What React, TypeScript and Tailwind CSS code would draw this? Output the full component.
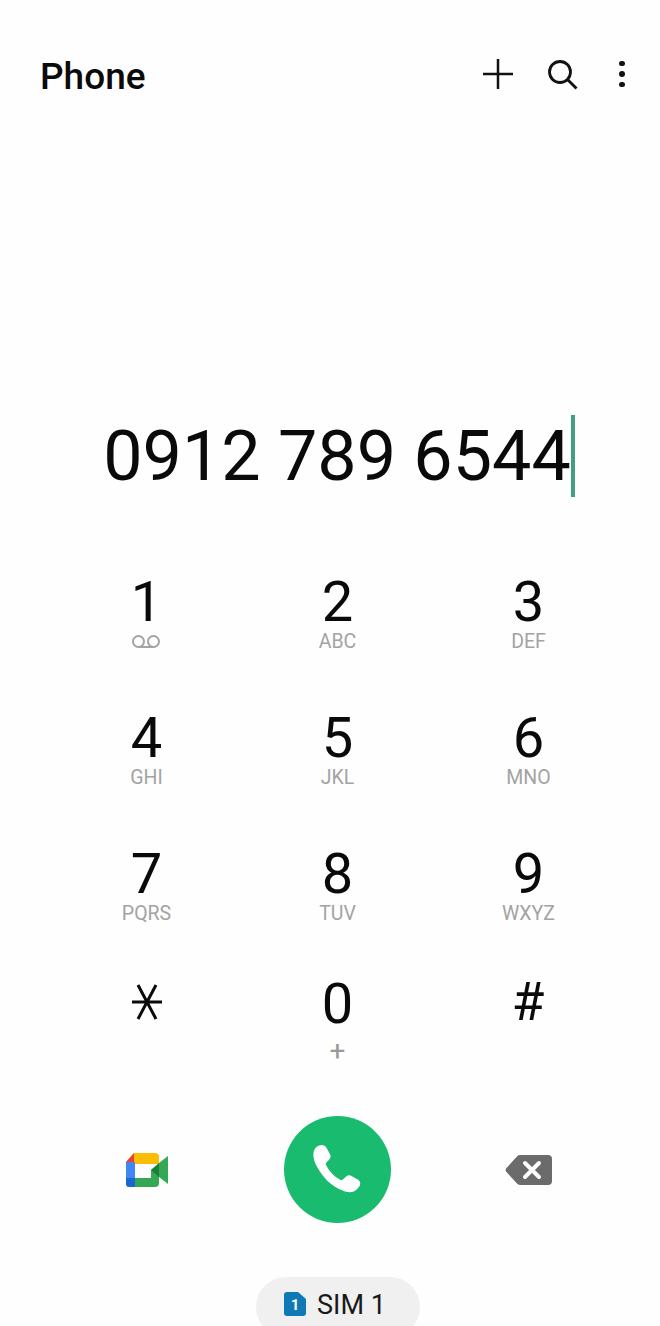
import React from 'react';

const keys = [
  { digit: '1', sub: 'voicemail' },
  { digit: '2', sub: 'ABC' },
  { digit: '3', sub: 'DEF' },
  { digit: '4', sub: 'GHI' },
  { digit: '5', sub: 'JKL' },
  { digit: '6', sub: 'MNO' },
  { digit: '7', sub: 'PQRS' },
  { digit: '8', sub: 'TUV' },
  { digit: '9', sub: 'WXYZ' },
  { digit: 'star', sub: '' },
  { digit: '0', sub: '+' },
  { digit: '#', sub: '' },
];

const StarIcon = () => (
  <svg className="-mt-[4px]" width="32" height="38" viewBox="0 0 32 38" fill="none" stroke="#0a0a0a" strokeWidth="3">
    <path d="M1 19h30M7 2l18 34M25 2L7 36" />
  </svg>
);

const VoicemailIcon = () => (
  <svg className="mr-[2px]" width="30" height="14" viewBox="0 0 30 14" fill="none" stroke="#a3a3a3" strokeWidth="2">
    <circle cx="7.5" cy="6.5" r="5.5" />
    <circle cx="22.5" cy="6.5" r="5.5" />
    <path d="M7.5 12h15" />
  </svg>
);

const MeetIcon = () => (
  <svg width="44" height="36" viewBox="0 0 44 36">
    <path d="M9 1h21a4 4 0 0 1 4 4v7H10v-2H1z" fill="#fbbc04" />
    <path d="M9 1v9H1z" fill="#ea4335" />
    <path d="M1 10h9v16H1z" fill="#4285f4" />
    <path d="M1 26h9v9H4a3 3 0 0 1-3-3z" fill="#1967d2" />
    <path d="M10 26h16v-8l8-6v19a4 4 0 0 1-4 4H10z" fill="#34a853" />
    <path d="M26 18l8-7v14z" fill="#188038" />
    <path d="M34 11l9-7v28l-9-7z" fill="#34a853" />
  </svg>
);

const PhoneIcon = () => (
  <svg width="54" height="54" viewBox="0 0 52 52" fill="#fff">
    <path d="M4.5 4.6c2-1.800 4.900-3 7.200-2.400 1.600.4 2.700 1.500 3.500 2.900l3.100 5.800c.9 1.700.7 3.300-.5 4.700l-2.900 3.100c-.7.8-.8 1.600-.4 2.500 2.900 6 7.700 11.100 13.600 14.300.9.500 1.800.4 2.500-.3l3.300-3c1.400-1.200 3-1.500 4.700-.6l5.900 3.300c1.800 1 2.900 2.400 2.900 4.200 0 3-3.300 6.300-6.100 7.500-3.400 1.400-7.200.7-10.900-.8C19.900 42 10.300 32.400 4.500 20.400 2.400 15.700.9 8.500 4.500 4.600z" />
  </svg>
);

const BackspaceIcon = () => (
  <svg width="48" height="32" viewBox="0 0 48 32">
    <path d="M15 1h28a4 4 0 0 1 4 4v22a4 4 0 0 1-4 4H15a4 4 0 0 1-3-1.400L1.500 18a3 3 0 0 1 0-4L12 2.400A4 4 0 0 1 15 1z" fill="#6b6b6b" />
    <path d="M20 9l14 14M34 9L20 23" stroke="#fff" strokeWidth="4" strokeLinecap="round" fill="none" />
  </svg>
);

const SimIcon = () => (
  <svg width="22" height="24" viewBox="0 0 22 24">
    <path d="M3 0h11l8 7v14a3 3 0 0 1-3 3H3a3 3 0 0 1-3-3V3a3 3 0 0 1 3-3z" fill="#0f79b5" />
    <text x="11" y="17.500" textAnchor="middle" fontSize="15" fontWeight="700" fill="#fff" fontFamily="Roboto, sans-serif">1</text>
  </svg>
);

export default function App() {
  return (
    <div className="w-[660px] h-[1326px] overflow-hidden bg-[#fefefe] flex flex-col font-['Roboto',sans-serif] text-[#0a0a0a]">
      <header className="flex items-center justify-between pl-10 pr-[35px] pt-[54px] h-[98px]">
        <h1 className="text-[37px] leading-[44px] font-medium mt-[2px]">Phone</h1>
        <div className="flex items-center mb-[4px]">
          <svg width="32" height="32" viewBox="0 0 32 32" fill="none" stroke="#111" strokeWidth="2.500">
            <path d="M16 1v30M1 16h30" />
          </svg>
          <svg className="ml-[33px]" width="32" height="32" viewBox="0 0 32 32" fill="none" stroke="#111" strokeWidth="2.800">
            <circle cx="13" cy="14" r="10.500" />
            <path d="M21 22l8.500 8.500" />
          </svg>
          <div className="ml-[40px] w-[6px] flex flex-col gap-[5px] items-center">
            <span className="w-[5.500px] h-[5.500px] rounded-full bg-[#111]" />
            <span className="w-[5.500px] h-[5.500px] rounded-full bg-[#111]" />
            <span className="w-[5.500px] h-[5.500px] rounded-full bg-[#111]" />
          </div>
        </div>
      </header>

      <div className="mt-[317px] h-[82px] flex items-center justify-center pl-[18px]">
        <span className="text-[70px] leading-[82px] whitespace-pre">0912 789 6544</span>
        <span className="w-[4px] h-[82px] bg-[#3f9f7f]" />
      </div>

      <div className="mt-[72px] pl-[51px] pr-[36px] grid grid-cols-3 auto-rows-[136px]">
        {keys.map((key, i) => (
          <div key={key.digit} className={i > 8 ? 'flex flex-col items-center -mt-[6px]' : 'flex flex-col items-center'}>
            <div className={key.digit === '#' ? 'h-[66px] flex items-center justify-center text-[53px] leading-[46px] -mt-[2px] mr-[1px]' : 'h-[66px] flex items-center justify-center text-[56px] leading-[46px]'}>
              {key.digit === 'star' ? <StarIcon /> : key.digit}
            </div>
            <div className="h-[18px] -mt-[2px] flex items-center justify-center text-[19.500px] leading-[18px] text-[#a3a3a3]">
              {key.sub === 'voicemail' ? <VoicemailIcon /> : key.sub === '+' ? (
                <span className="text-[28px] font-normal text-[#999] mt-[14px]">+</span>
              ) : key.sub}
            </div>
          </div>
        ))}
      </div>

      <div className="mt-[3px] pl-[51px] pr-[36px] grid grid-cols-3 items-center h-[108px]">
        <div className="flex justify-center"><MeetIcon /></div>
        <div className="flex justify-center">
          <div className="w-[107px] h-[107px] rounded-full bg-[#19bb6f] flex items-center justify-center">
            <PhoneIcon />
          </div>
        </div>
        <div className="flex justify-center"><BackspaceIcon /></div>
      </div>

      <div className="mt-[54px] pl-[15px] flex justify-center">
        <div className="w-[164px] h-[60px] rounded-[30px] bg-[#f0f0f0] flex items-start justify-center gap-[11px] pt-[15px] pr-[5px]">
          <SimIcon />
          <span className="text-[27px] leading-[26px] text-[#1a1a1a]">SIM 1</span>
        </div>
      </div>
    </div>
  );
}
